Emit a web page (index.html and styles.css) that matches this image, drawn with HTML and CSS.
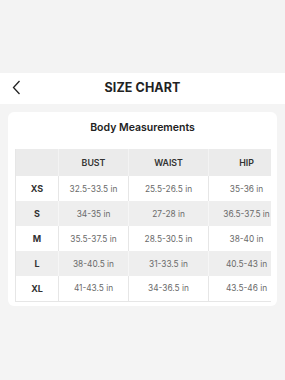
FILE: index.html
```html
<!DOCTYPE html>
<html>
<head>
<meta charset="utf-8">
<link rel="stylesheet" href="styles.css">
</head>
<body>
<div class="page">
  <div class="top"></div>
  <header class="bar">
    <div class="back">
      <svg width="9" height="15" viewBox="0 0 9 15"><path d="M7.5 1 L1.5 7.5 L7.5 14" fill="none" stroke="#222" stroke-width="1.3"/></svg>
    </div>
    <h1 class="title">SIZE CHART</h1>
    <div></div>
  </header>
  <section class="card">
    <h2 class="card-title">Body Measurements</h2>
    <div class="table-wrap">
      <table class="chart">
        <colgroup><col class="c1"><col class="c2"><col class="c3"><col class="c4"></colgroup>
        <thead>
          <tr><th></th><th>BUST</th><th>WAIST</th><th class="hip">HIP</th></tr>
        </thead>
        <tbody>
          <tr><th>XS</th><td>32.5-33.5 in</td><td>25.5-26.5 in</td><td>35-36 in</td></tr>
          <tr class="alt"><th>S</th><td>34-35 in</td><td>27-28 in</td><td>36.5-37.5 in</td></tr>
          <tr><th>M</th><td>35.5-37.5 in</td><td>28.5-30.5 in</td><td>38-40 in</td></tr>
          <tr class="alt"><th>L</th><td>38-40.5 in</td><td>31-33.5 in</td><td>40.5-43 in</td></tr>
          <tr><th>XL</th><td>41-43.5 in</td><td>34-36.5 in</td><td>43.5-46 in</td></tr>
        </tbody>
      </table>
    </div>
  </section>
</div>
</body>
</html>
```
FILE: styles.css
```css
* { box-sizing: border-box; }
html, body { margin: 0; padding: 0; }
body {
  background: #f4f4f4;
  font-family: Inter, "Open Sans", sans-serif;
  width: 285px;
  height: 380px;
  overflow: hidden;
}
.top { height: 73px; background: #f3f3f3; }
.bar {
  height: 31px;
  background: #fff;
  display: grid;
  grid-template-columns: 1fr auto 1fr;
  align-items: center;
  padding-bottom: 3px;
}
.back { padding-left: 12px; display: flex; align-items: center; }
.title {
  margin: 0;
  font-size: 12.5px;
  font-weight: 700;
  color: #222;
  letter-spacing: 0.1px;
}
.card {
  margin: 8px 8px 0;
  background: #fff;
  border-radius: 6px;
  padding: 9px 7px 4px;
}
.card-title {
  margin: 0 0 14px;
  text-align: center;
  font-size: 10.5px;
  font-weight: 600;
  color: #222;
  line-height: 14px;
}
.table-wrap { overflow: hidden; width: 256px; }
.chart {
  border-collapse: collapse;
  table-layout: fixed;
  width: 269px;
  font-size: 8.3px;
  border-bottom: 1px solid #e6e6e6;
  border-left: 1px solid #e6e6e6;
}
.c1 { width: 43px; }
.c2 { width: 70px; }
.c3 { width: 80px; }
.c4 { width: 76px; }
.chart th, .chart td {
  text-align: center;
  padding: 0;
  border-right: 1px solid #e6e6e6;
  white-space: nowrap;
}
.chart thead tr { background: #ebebeb; height: 27px; }
.chart thead th {
  font-weight: 600;
  color: #333;
  font-size: 8.8px;
  border-right-color: #f3f3f3;
}
.chart tbody tr { height: 25px; }
.chart tbody th { font-weight: 700; color: #333; font-size: 9px; }
.chart td { color: #6a6a6a; }
.chart tr.alt { background: #eeeeee; }
.chart tr.alt th, .chart tr.alt td { border-right-color: #f6f6f6; }
```
